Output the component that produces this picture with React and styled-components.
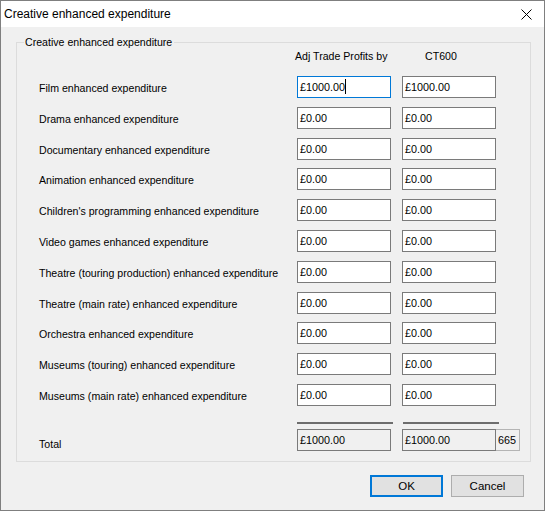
import React from 'react';
import styled, { createGlobalStyle } from 'styled-components';

const Global = createGlobalStyle`
    html, body {
        margin: 0;
        padding: 0;
        background: #f0f0f0;
    }
    * { box-sizing: border-box; }
`

const Window = styled.div`
    width: 545px;
    height: 511px;
    border: 1px solid #7f7f7f;
    background-color: #f0f0f0;
    background-image: radial-gradient(circle, #dfdfdf 0.5px, transparent 0.7px);
    background-size: 8px 8px;
    background-position: 4px 1px;
    font-family: "Liberation Sans", Arial, sans-serif;
    color: #000;
    display: flex;
    flex-direction: column;
`

const TitleBar = styled.div`
    height: 26px;
    background: #fff;
    display: flex;
    align-items: center;
    justify-content: space-between;
    padding: 0 12px 0 3px;
    font-size: 12px;
    flex-shrink: 0;
`

const Close = styled.svg`
    width: 11px;
    height: 11px;
`

const Group = styled.div`
    position: relative;
    margin: 15px 0 0 15px;
    width: 515px;
    height: 420px;
    border: 1px solid #dcdcdc;
    padding: 7px 0 0 22px;
    font-size: 10.6px;
`

const Legend = styled.span`
    position: absolute;
    top: -7px;
    left: 7px;
    padding: 0 2px 0 1px;
    background: #f0f0f0;
    line-height: 13px;
`

const HeaderRow = styled.div`
    display: flex;
    height: 12px;
    line-height: 12px;
    margin-bottom: 14px;
`

const HeaderCell = styled.div`
    width: ${p => p.$w}px;
    margin-left: ${p => p.$ml || 0}px;
    text-align: ${p => p.$align || 'left'};
`

const Rows = styled.div`
    display: flex;
    flex-direction: column;
    gap: 8.8px;
`

const Row = styled.div`
    display: flex;
    align-items: center;
    height: 22px;
`

const Label = styled.div`
    width: 258px;
    flex-shrink: 0;
    padding-top: ${p => p.$drop || 2}px;
    white-space: nowrap;
`

const Field = styled.div`
    width: 94px;
    height: 22px;
    margin-left: ${p => p.$ml || 0}px;
    border: 1px solid ${p => p.$focus ? '#0078d7' : '#7a7a7a'};
    background: ${p => p.$disabled ? 'transparent' : '#fff'};
    padding: 3px 0 0 2px;
    line-height: 14px;
    font-size: 10.8px;
    display: flex;
    align-items: flex-start;
    flex-shrink: 0;
`

const Caret = styled.span`
    display: inline-block;
    width: 1px;
    height: 15px;
    margin-top: -1px;
    background: #000;
`

const Suffix = styled.div`
    width: 24px;
    height: 22px;
    border: 1px solid #b4b4b4;
    border-left: none;
    padding: 3px 0 0 2px;
    line-height: 14px;
    font-size: 10.8px;
`

const RuleRow = styled.div`
    display: flex;
    margin: 16px 0 5px 258px;
`

const Rule = styled.div`
    width: 96px;
    height: 2px;
    background: #6d6d6d;
    margin-left: ${p => p.$ml || 0}px;
`

const Buttons = styled.div`
    display: flex;
    justify-content: flex-end;
    gap: 8px;
    padding: 13px 20px 0 0;
`

const Button = styled.button`
    width: 73px;
    height: 22px;
    font-family: "Liberation Sans", Arial, sans-serif;
    font-size: 11.5px;
    color: #000;
    background: #e1e1e1;
    border: ${p => p.$primary ? '2px solid #0078d7' : '1px solid #adadad'};
    padding: 0;
    margin: 0;
`

const items = [
    'Film enhanced expenditure',
    'Drama enhanced expenditure',
    'Documentary enhanced expenditure',
    'Animation enhanced expenditure',
    "Children's programming enhanced expenditure",
    'Video games enhanced expenditure',
    'Theatre (touring production) enhanced expenditure',
    'Theatre (main rate) enhanced expenditure',
    'Orchestra enhanced expenditure',
    'Museums (touring) enhanced expenditure',
    'Museums (main rate) enhanced expenditure',
];

export default function App () {
    return (
        <>
            <Global />
            <Window>
                <TitleBar>
                    <span>Creative enhanced expenditure</span>
                    <Close viewBox="0 0 11 11">
                        <path d="M0.5 0.5 L10.5 10.5 M10.5 0.5 L0.5 10.5" stroke="#000" strokeWidth="1" fill="none" />
                    </Close>
                </TitleBar>
                <Group>
                    <Legend>Creative enhanced expenditure</Legend>
                    <HeaderRow>
                        <HeaderCell $w={256} />
                        <HeaderCell $w={100}>Adj Trade Profits by</HeaderCell>
                        <HeaderCell $w={94} $ml={-1} $align="center">CT600</HeaderCell>
                    </HeaderRow>
                    <Rows>
                        {items.map((label, i) => (
                            <Row key={label}>
                                <Label>{label}</Label>
                                <Field $focus={i === 0}>
                                    {i === 0 ? '£1000.00' : '£0.00'}
                                    {i === 0 && <Caret />}
                                </Field>
                                <Field $ml={11}>{i === 0 ? '£1000.00' : '£0.00'}</Field>
                            </Row>
                        ))}
                    </Rows>
                    <RuleRow>
                        <Rule />
                        <Rule $ml={10} />
                    </RuleRow>
                    <Row>
                        <Label $drop={9}>Total</Label>
                        <Field $disabled>£1000.00</Field>
                        <Field $disabled $ml={11}>£1000.00</Field>
                        <Suffix>665</Suffix>
                    </Row>
                </Group>
                <Buttons>
                    <Button $primary>OK</Button>
                    <Button>Cancel</Button>
                </Buttons>
            </Window>
        </>
    );
}
